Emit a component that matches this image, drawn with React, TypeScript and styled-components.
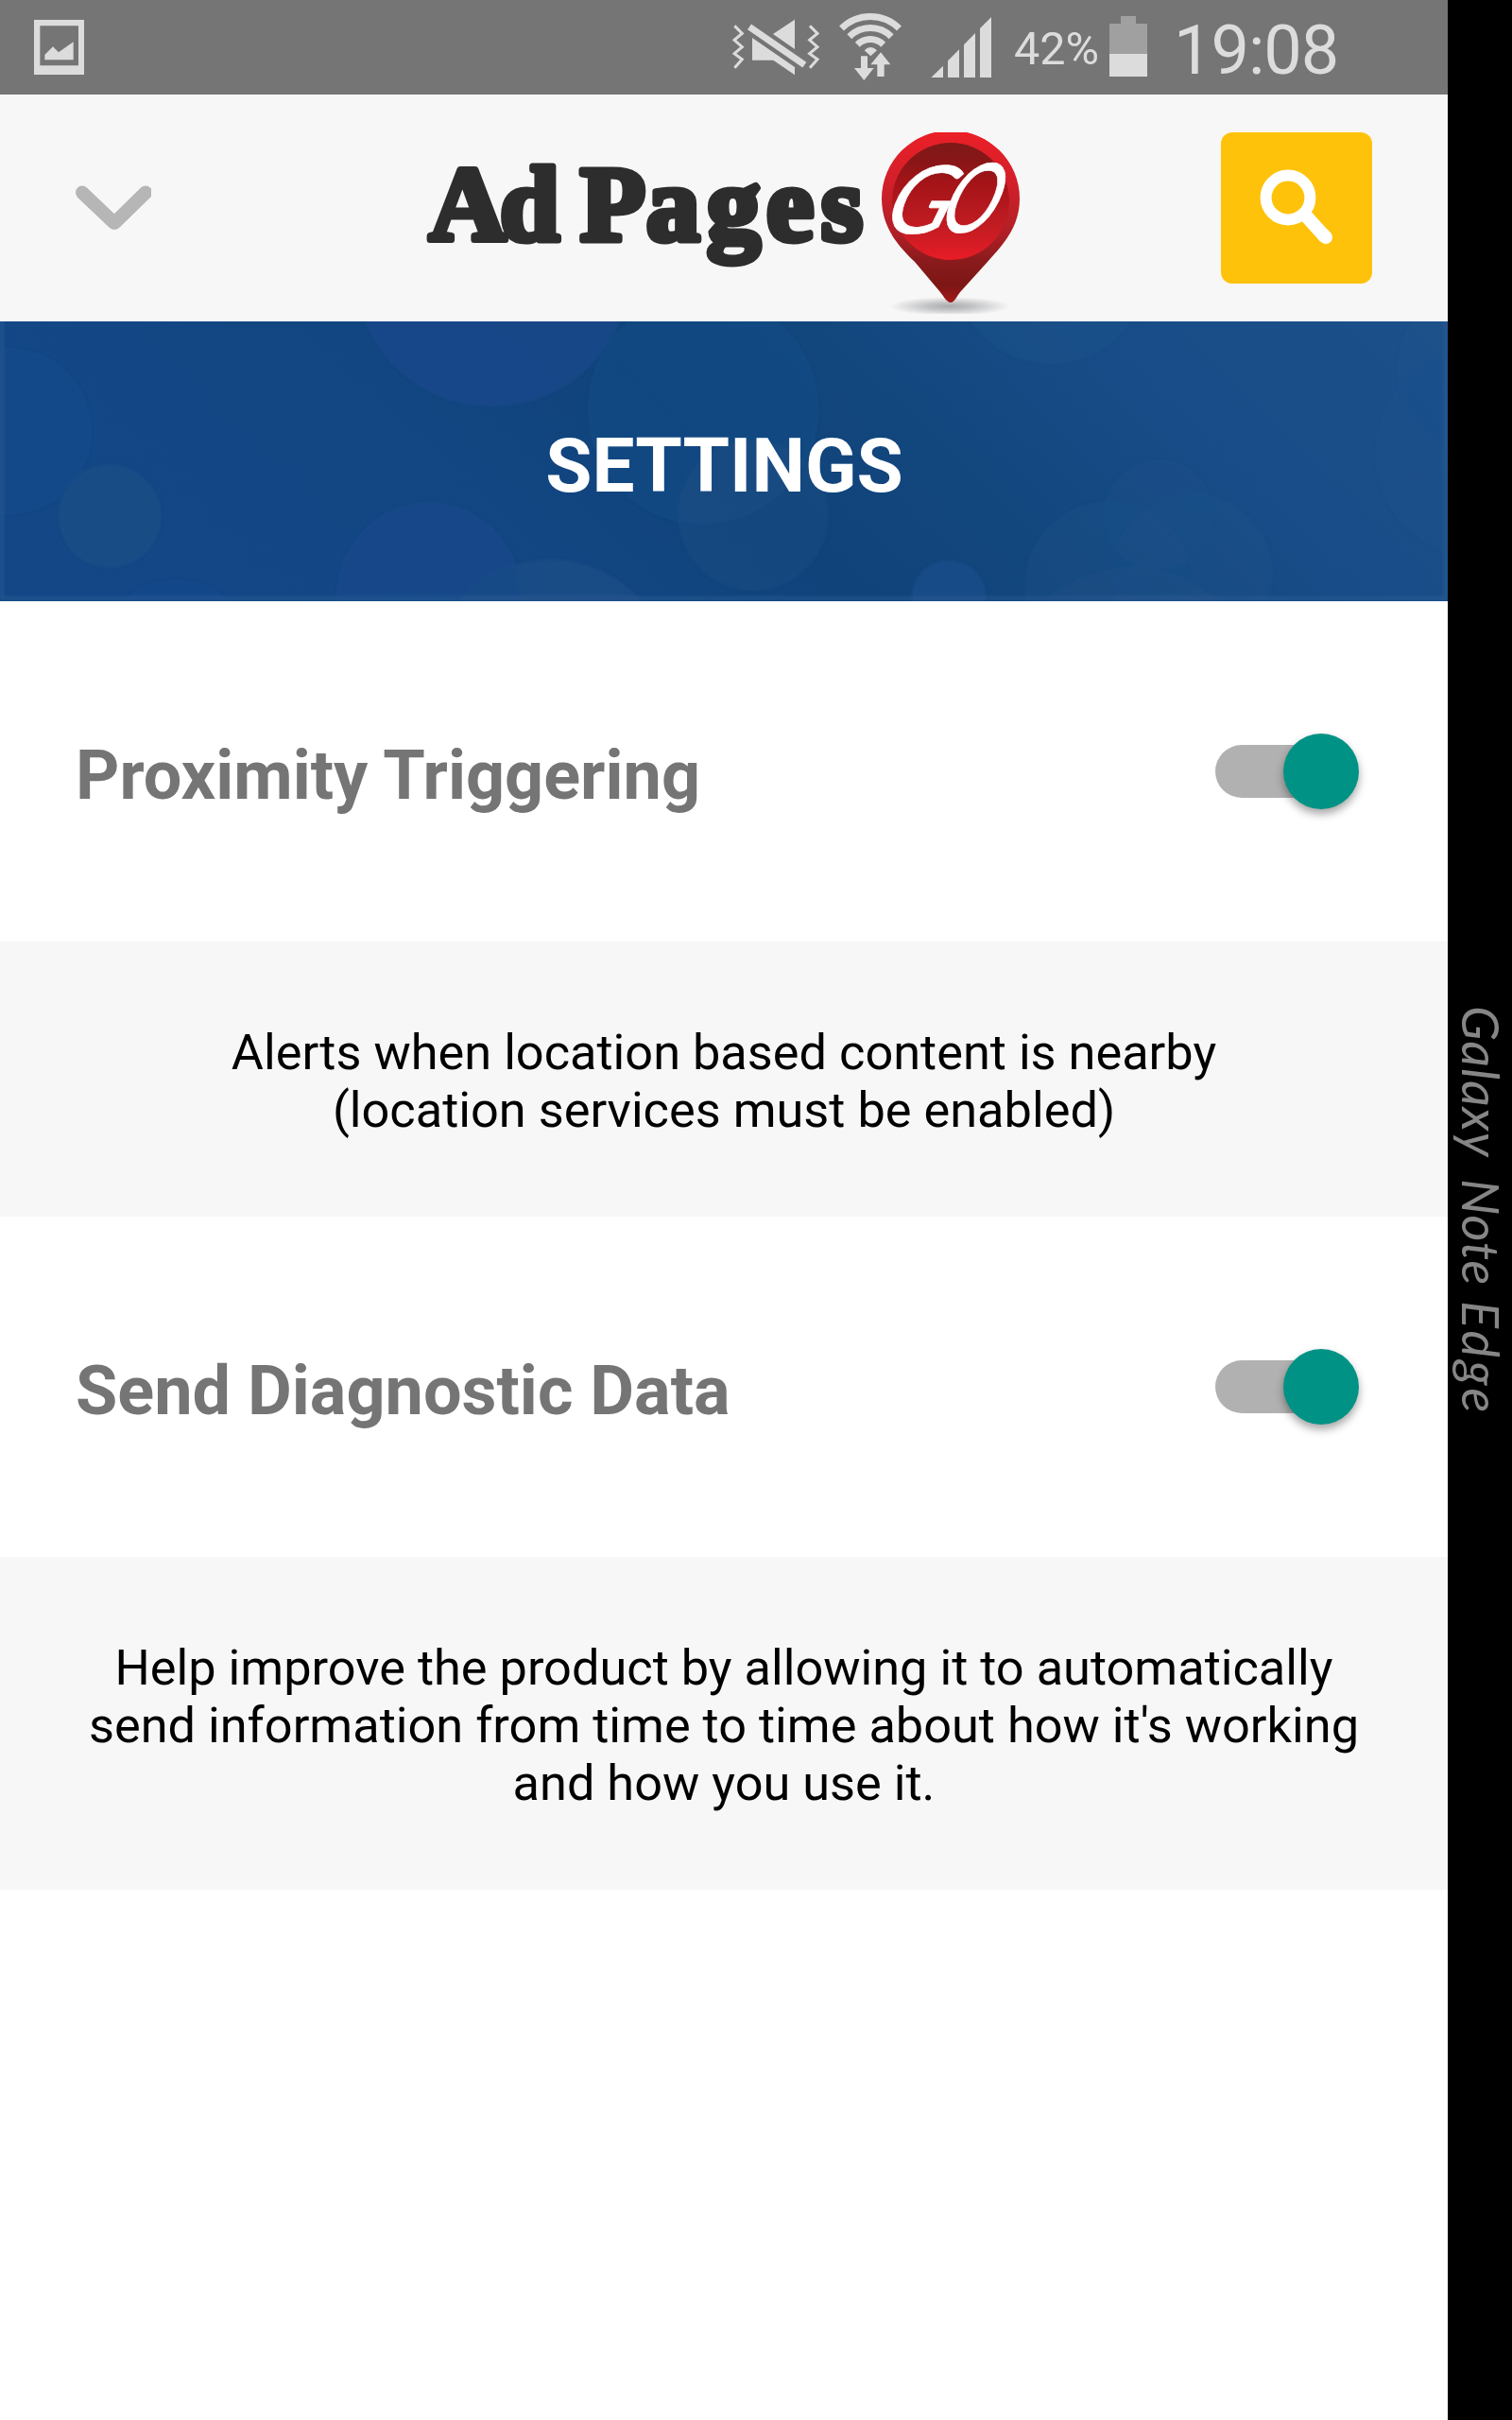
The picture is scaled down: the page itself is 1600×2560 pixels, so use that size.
import React from "react";
import styled, { createGlobalStyle } from "styled-components";

const GlobalStyle = createGlobalStyle`
  * { box-sizing: border-box; }
  body { margin: 0; background: #000; font-family: Roboto, "Noto Sans", sans-serif; }
  svg { display: block; flex: none; }
`;

const Device = styled.div`
  display: flex;
  width: 1600px;
  height: 2560px;
  background: #000;
  overflow: hidden;
`;

const Screen = styled.main`
  display: flex;
  flex-direction: column;
  width: 1532px;
  height: 100%;
  background: #fff;
`;

const StatusBar = styled.div`
  display: flex;
  align-items: center;
  height: 100px;
  padding: 0 115px 0 36px;
  background: #757575;
  color: #dcdcdc;
  flex: none;
`;

const StatusGroup = styled.div`
  display: flex;
  align-items: center;
  height: 100px;
  margin-left: auto;
`;

const Gap = styled.span<{ $w: number }>`
  flex: none;
  width: ${(p) => p.$w}px;
`;

const StatusText = styled.span<{ $size: number; $w: number; $top: number; $track: number }>`
  flex: none;
  width: ${(p) => p.$w}px;
  padding-top: ${(p) => p.$top}px;
  font-size: ${(p) => p.$size}px;
  letter-spacing: ${(p) => p.$track}px;
  line-height: 1;
  white-space: nowrap;
`;

const Header = styled.header`
  display: flex;
  align-items: center;
  justify-content: space-between;
  height: 240px;
  padding: 0 80px;
  background: #f7f7f7;
  flex: none;
`;

const LogoArt = styled.svg`
  overflow: visible;
`;

const IconButton = styled.button`
  display: flex;
  align-items: center;
  width: 160px;
  height: 160px;
  padding: 0;
  border: 0;
  background: transparent;
`;

const SearchButton = styled(IconButton)`
  background: #ffc20a;
  border-radius: 12px;
`;

const Banner = styled.section`
  display: grid;
  height: 296px;
  flex: none;
  overflow: hidden;
  & > * { grid-area: 1 / 1; }
`;

const BannerTitle = styled.h1`
  place-self: center;
  margin: 0;
  padding: 10px 0 0 1px;
  color: #fff;
  font-size: 80px;
  font-weight: 700;
  line-height: 94px;
`;

const SettingRow = styled.section`
  display: flex;
  align-items: center;
  justify-content: space-between;
  height: 360px;
  padding: 0 94px 0 80px;
  flex: none;
`;

const SettingLabel = styled.h2`
  margin: 0;
  padding-top: 10px;
  color: #757575;
  font-size: 72px;
  font-weight: 700;
  line-height: 84px;
`;

const Toggle = styled.span`
  display: flex;
  align-items: center;
  width: 152px;
  height: 80px;
`;

const Rail = styled.span`
  flex: none;
  width: 124px;
  height: 56px;
  margin-right: -52px;
  border-radius: 28px;
  background: #b1b1b1;
`;

const Knob = styled.span`
  flex: none;
  width: 80px;
  height: 80px;
  border-radius: 50%;
  background: #009385;
  box-shadow: 0 5px 10px rgba(0, 0, 0, 0.36);
`;

const Info = styled.p`
  margin: 0;
  padding: 87px 70px 82px;
  background: #f7f7f7;
  color: #000;
  font-size: 52.3px;
  line-height: 61px;
  text-align: center;
  flex: none;
`;

const EdgePanel = styled.aside`
  display: flex;
  flex-direction: column;
  align-items: flex-start;
  width: 68px;
  padding: 1064px 0 0 0;
  color: #868686;
`;

const EdgeWord = styled.span<{ $h: number; $track: number }>`
  writing-mode: vertical-rl;
  width: 68px;
  height: ${(p) => p.$h}px;
  flex: none;
  font-family: Lato, sans-serif;
  font-style: italic;
  font-size: 54px;
  line-height: 66px;
  letter-spacing: ${(p) => p.$track}px;
  white-space: nowrap;
`;

const PictureIcon = () => (
  <svg width="54" height="100" viewBox="108 0 162 300" fill="#dcdcdc">
    <path fillRule="evenodd" d="M108 63H267V237H108ZM127 82V208H249V82Z" />
    <path d="M142 190V174L168 148L186 166L233 133V190Z" />
  </svg>
);

const zigzag = "M52 82L76 106L51 127L76 149L51 170L76 188L52 215";

const MuteVibrateIcon = () => (
  <svg width="93" height="100" viewBox="45 0 279 300" fill="#dcdcdc">
    <g fill="none" stroke="#dcdcdc" strokeWidth="9">
      <path d={zigzag} />
      <path d={zigzag} transform="translate(239 0)" />
      <path d="M99 85L274 206" strokeWidth="21" />
    </g>
    <path d="M243 62V156L174 108Z" />
    <path d="M108 120L243 213V238L175 191H108Z" />
  </svg>
);

const WifiIcon = () => (
  <svg width="67" height="100" viewBox="384 0 201 300" fill="#dcdcdc">
    <g fill="none" stroke="#dcdcdc" strokeWidth="21">
      <path d="M391.5 90A129.5 129.5 0 0 1 574.500 90" />
      <path d="M416.500 116A94 94 0 0 1 549.500 116" />
      <path d="M442 141.500A58 58 0 0 1 524 141.500" />
    </g>
    <path d="M464 160Q483 140 504 160L484 178Z" />
    <path d="M453 178H474V216H494L463 255L432 216H453Z" />
    <path d="M505 243V205H484L516 166L547 205H527V243Z" />
  </svg>
);

const SignalIcon = () => (
  <svg width="65" height="100" viewBox="675 0 195 300" fill="#dcdcdc">
    <path d="M676 246L714 209V246ZM729 246V193L765 157V246ZM780 246V142L816 105V246ZM831 246V90L867 54V246Z" />
  </svg>
);

const BatteryIcon = () => (
  <svg width="40" height="100" viewBox="342 0 120 300">
    <path fill="#a0a0a0" d="M342 171V75H378V51H426V75H462V171Z" />
    <path fill="#dcdcdc" d="M342 171H462V243H342Z" />
  </svg>
);

const ChevronIcon = () => (
  <svg width="80" height="50" viewBox="0 0 80 50" fill="none" stroke="#b6b6b6">
    <path d="M6 8L41 41L75 8" strokeWidth="14" strokeLinejoin="bevel" />
    <path d="M7 8.500L41 41L74 8.500" strokeWidth="14" strokeLinecap="round" strokeLinejoin="round" />
  </svg>
);

const SearchIcon = () => (
  <svg width="160" height="160" viewBox="1292 140 160 160" fill="none" stroke="#fff">
    <circle cx="1363" cy="209" r="23.400" strokeWidth="12" />
    <path d="M1379 225L1402.500 251" strokeWidth="14" />
    <path d="M1400 248L1403 251" strokeWidth="14" strokeLinecap="round" />
  </svg>
);

const Logo = () => (
  <LogoArt width="628" height="240" viewBox="452 100 628 240">
    <defs>
      <linearGradient id="pin" x1="0" y1="0" x2="0" y2="1">
        <stop offset="0" stopColor="#ec1f27" />
        <stop offset="0.3" stopColor="#d2202a" />
        <stop offset="0.6" stopColor="#b01f26" />
        <stop offset="0.75" stopColor="#8c1b1d" />
        <stop offset="0.9" stopColor="#7c1614" />
        <stop offset="1" stopColor="#a5181a" />
      </linearGradient>
      <linearGradient id="face" x1="0" y1="0" x2="0" y2="1">
        <stop offset="0" stopColor="#7c1a18" />
        <stop offset="0.18" stopColor="#8b1517" />
        <stop offset="0.35" stopColor="#a51418" />
        <stop offset="0.7" stopColor="#c01c22" />
        <stop offset="1" stopColor="#e81c26" />
      </linearGradient>
      <radialGradient id="shade">
        <stop offset="0" stopColor="#a9abad" />
        <stop offset="0.4" stopColor="#c4c5c7" />
        <stop offset="1" stopColor="#f7f7f7" />
      </radialGradient>
    </defs>
    <g
      fill="#2d2d2d"
      stroke="#2d2d2d"
      strokeWidth="7"
      strokeLinejoin="round"
      fontFamily='"Liberation Serif", "Times New Roman", serif'
      fontWeight="700"
      fontSize="113"
    >
      <text x="454 529" y="253.5">Ad</text>
      <text x="614 684 748 811 869" y="253.5">Pages</text>
    </g>
    <svg x="932" y="140" width="148" height="192" viewBox="932 140 148 192">
      <ellipse cx="1005" cy="324" rx="64" ry="10" fill="url(#shade)" />
      <path
        fill="url(#pin)"
        d="M1006 320C1002 320 999 314 995 309L968 277C950 260 933 240 933 210A73 72 0 0 1 1079 210C1079 240 1062 258 1045 277L1016 309C1012 314 1010 320 1006 320Z"
      />
      <ellipse cx="1006" cy="213" rx="62" ry="62" fill="url(#face)" />
    </svg>
    <g fill="#fff" stroke="#fff" strokeWidth="0.6" fontFamily="Lato, sans-serif" fontStyle="italic" fontSize="100">
      <text transform="translate(931 247) skewX(-20) scale(1 1)">G</text>
      <text transform="translate(990 246) skewX(-20) scale(.78 1.02)">O</text>
    </g>
  </LogoArt>
);

const bubbles: [number, number, number, string, number][] = [
  [521, 284, 146, "#15498a", 0.85],
  [744, 433, 122, "#174c86", 0.6],
  [797, 545, 80, "#184e84", 0.35],
  [454, 629, 97, "#15498a", 0.85],
  [582, 721, 129, "#1b4e87", 0.65],
  [116, 546, 54, "#1b4e84", 0.7],
  [9, 456, 88, "#174b8a", 0.55],
  [186, 704, 90, "#164a8c", 0.6],
  [1004, 632, 39, "#184d8a", 0.85],
  [1174, 620, 90, "#1e5288", 0.28],
  [1226, 544, 58, "#1e5288", 0.18],
  [1262, 607, 85, "#20548a", 0.22],
  [1198, 740, 140, "#20548a", 0.28],
  [1112, 282, 103, "#20548a", 0.35],
  [1565, 480, 110, "#20548c", 0.22],
  [1570, 390, 92, "#20548c", 0.22],
];

const BannerArt = () => (
  <svg width="1532" height="296" viewBox="0 340 1532 296">
    <defs>
      <linearGradient id="sky" x1="0" y1="0.2" x2="1" y2="0">
        <stop offset="0" stopColor="#134786" />
        <stop offset="0.25" stopColor="#124682" />
        <stop offset="0.42" stopColor="#10437a" />
        <stop offset="0.58" stopColor="#12477e" />
        <stop offset="0.75" stopColor="#184c88" />
        <stop offset="1" stopColor="#1b508a" />
      </linearGradient>
      <filter id="soft" x="-5%" y="-5%" width="110%" height="110%">
        <feGaussianBlur stdDeviation="1.5" />
      </filter>
    </defs>
    <rect y="340" width="1532" height="296" fill="url(#sky)" />
    <g filter="url(#soft)">
      {bubbles.map(([cx, cy, r, fill, o], i) => (
        <circle key={i} cx={cx} cy={cy} r={r} fill={fill} opacity={o} />
      ))}
      <path d="M2 320V633H1530V320" fill="none" stroke="#2f5f95" strokeWidth="5" opacity="0.4" />
    </g>
  </svg>
);

const Switch = () => (
  <Toggle role="switch" aria-checked="true">
    <Rail />
    <Knob />
  </Toggle>
);

export default function App() {
  return (
    <>
      <GlobalStyle />
      <Device>
        <Screen>
          <StatusBar>
            <PictureIcon />
            <StatusGroup>
              <MuteVibrateIcon />
              <Gap $w={20} />
              <WifiIcon />
              <Gap $w={30} />
              <SignalIcon />
              <Gap $w={23} />
              <StatusText $size={48.5} $w={88} $top={5} $track={0}>42%</StatusText>
              <Gap $w={13} />
              <BatteryIcon />
              <Gap $w={28} />
              <StatusText $size={72} $w={175} $top={7} $track={-1}>19:08</StatusText>
            </StatusGroup>
          </StatusBar>
          <Header>
            <IconButton aria-label="Back">
              <ChevronIcon />
            </IconButton>
            <Logo />
            <SearchButton aria-label="Search">
              <SearchIcon />
            </SearchButton>
          </Header>
          <Banner>
            <BannerArt />
            <BannerTitle>SETTINGS</BannerTitle>
          </Banner>
          <SettingRow>
            <SettingLabel>Proximity Triggering</SettingLabel>
            <Switch />
          </SettingRow>
          <Info>
            Alerts when location based content is nearby
            <br />
            (location services must be enabled)
          </Info>
          <SettingRow>
            <SettingLabel>Send Diagnostic Data</SettingLabel>
            <Switch />
          </SettingRow>
          <Info>
            Help improve the product by allowing it to automatically
            <br />
            send information from time to time about how it's working
            <br />
            and how you use it.
          </Info>
        </Screen>
        <EdgePanel>
          <EdgeWord $h={183} $track={1}>Galaxy</EdgeWord>
          <EdgeWord $h={129} $track={1}>Note</EdgeWord>
          <EdgeWord $h={130} $track={3.5}>Edge</EdgeWord>
        </EdgePanel>
      </Device>
    </>
  );
}
